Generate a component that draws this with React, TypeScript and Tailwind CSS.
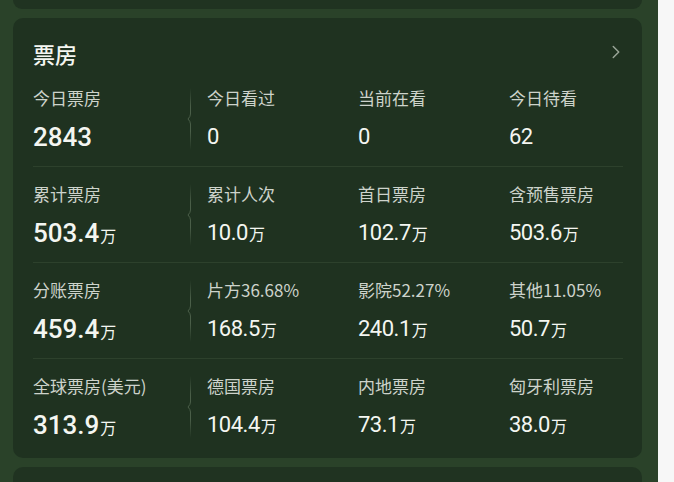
import { ChevronRight } from "lucide-react";

type Cell = { label: string; value: string; unit?: string };

const rows: Cell[][] = [
  [
    { label: "今日票房", value: "2843" },
    { label: "今日看过", value: "0" },
    { label: "当前在看", value: "0" },
    { label: "今日待看", value: "62" },
  ],
  [
    { label: "累计票房", value: "503.4", unit: "万" },
    { label: "累计人次", value: "10.0", unit: "万" },
    { label: "首日票房", value: "102.7", unit: "万" },
    { label: "含预售票房", value: "503.6", unit: "万" },
  ],
  [
    { label: "分账票房", value: "459.4", unit: "万" },
    { label: "片方36.68%", value: "168.5", unit: "万" },
    { label: "影院52.27%", value: "240.1", unit: "万" },
    { label: "其他11.05%", value: "50.7", unit: "万" },
  ],
  [
    { label: "全球票房(美元)", value: "313.9", unit: "万" },
    { label: "德国票房", value: "104.4", unit: "万" },
    { label: "内地票房", value: "73.1", unit: "万" },
    { label: "匈牙利票房", value: "38.0", unit: "万" },
  ],
];

const cjk = "font-['Noto_Sans_CJK_SC','Noto_Sans',sans-serif]";
const num = "font-['Roboto','Noto_Sans_CJK_SC',sans-serif]";

const Divider = () => (
  <svg width="8" height="62" viewBox="0 0 8 62" className="mt-[17px] shrink-0">
    <defs>
      <linearGradient id="fade" x1="0" y1="0" x2="0" y2="1">
        <stop offset="0" stopColor="#4a5e48" stopOpacity="0" />
        <stop offset="0.3" stopColor="#4a5e48" stopOpacity="1" />
        <stop offset="0.7" stopColor="#4a5e48" stopOpacity="1" />
        <stop offset="1" stopColor="#4a5e48" stopOpacity="0" />
      </linearGradient>
    </defs>
    <path d="M5.5 0 V26 Q5.5 28.5 3 31 Q5.5 33.5 5.5 36 V62" fill="none" stroke="url(#fade)" strokeWidth="1" />
  </svg>
);

const Stat = ({ cell, big }: { cell: Cell; big?: boolean }) => (
  <div className="flex flex-col">
    <div className={`${cjk} mt-[17px] h-[20px] text-[17px] leading-[20px] text-[#cdd3cb] whitespace-nowrap`}>
      {cell.label}
    </div>
    <div className="mt-[14px] flex h-[30px] items-baseline leading-none text-[#f4f6f1]">
      <span className={`${num} ${big ? "text-[26px] font-medium" : "text-[22px] tracking-[-0.5px]"} leading-[30px]`}>
        {cell.value}
      </span>
      {cell.unit && (
        <span className={`${cjk} ml-[1px] text-[16px] leading-[30px]`}>{cell.unit}</span>
      )}
    </div>
  </div>
);

export default function App() {
  return (
    <div className="flex h-[482px] w-[674px] overflow-hidden bg-[#f7f7f7]">
      <div className="flex h-full w-[658px] flex-col bg-[#2a4229] pl-[13px] pr-[16px]">
        <div className="h-[9px] shrink-0 rounded-b-[10px] bg-[#203321]" />
        <div className="mt-[9px] h-[440px] shrink-0 rounded-[10px] bg-[#1f3220] pl-[20px] pr-[19px]">
          <div className="flex h-[53px] items-start justify-between pt-[22px]">
            <span className={`${cjk} text-[22px] font-medium leading-[26px] text-[#f4f6f1]`}>票房</span>
            <ChevronRight className="mr-[-4px] mt-[1px] h-[22px] w-[22px] text-[#9aa597]" strokeWidth={1.6} />
          </div>
          {rows.map((row, i) => (
            <div
              key={i}
              className={`flex h-[96px] ${i < rows.length - 1 ? "border-b border-[#2d412c]" : ""}`}
            >
              <div className="w-[152px] shrink-0">
                <Stat cell={row[0]} big />
              </div>
              <Divider />
              <div className="w-[14px] shrink-0" />
              {row.slice(1).map((c, j) => (
                <div key={j} className="w-[151px] shrink-0">
                  <Stat cell={c} />
                </div>
              ))}
            </div>
          ))}
        </div>
        <div className="mt-[9px] h-[40px] shrink-0 rounded-t-[10px] bg-[#203321]" />
      </div>
    </div>
  );
}
